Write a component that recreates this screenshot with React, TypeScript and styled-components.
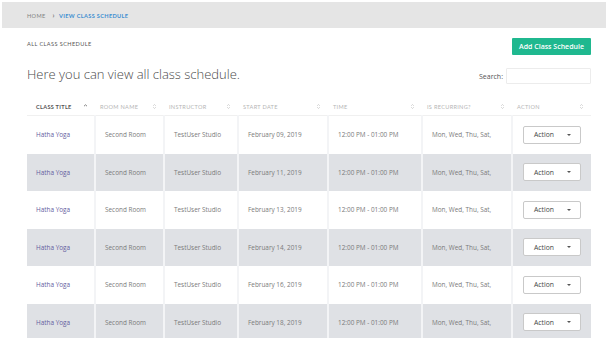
import React from "react";
import styled, { createGlobalStyle } from "styled-components";

const Global = createGlobalStyle`
  html, body { margin: 0; padding: 0; background: #ffffff; }
  body { font-family: "Lato", "Open Sans", sans-serif; }
`;

const Page = styled.div`
  width: 606px;
  height: 338px;
  overflow: hidden;
  background: #fff;
`;

const Breadcrumb = styled.nav`
  margin: 2px 0 0 2px;
  height: 26px;
  background: #e5e5e5;
  display: flex;
  align-items: center;
  padding-left: 25px;
  gap: 4px;
  font-family: "Lato", sans-serif;
  font-size: 5.6px;
  letter-spacing: 0.35px;
  text-transform: uppercase;
`;

const Crumb = styled.span<{ $active?: boolean }>`
  color: ${(p) => (p.$active ? "#3d8fd1" : "#808080")};
  font-weight: ${(p) => (p.$active ? 700 : 400)};
`;

const Sep = styled.span`
  color: #777;
  font-size: 7px;
  font-weight: 700;
  margin: 0 0 0 3px;
`;

const Content = styled.main`
  padding: 0 15px 0 27px;
`;

const TopRow = styled.div`
  margin-top: 10px;
  height: 17px;
  display: flex;
  align-items: center;
  justify-content: space-between;
`;

const SectionLabel = styled.span`
  font-size: 5.6px;
  letter-spacing: 0.4px;
  color: #555;
  text-transform: uppercase;
  font-weight: 400;
  margin-top: -7px;
`;

const AddButton = styled.button`
  width: 79px;
  height: 17px;
  border: none;
  border-radius: 1px;
  background: #1fb88f;
  color: #fff;
  font-family: "Open Sans", sans-serif;
  font-size: 7px;
  font-weight: 600;
  padding: 0;
  cursor: pointer;
`;

const HeadRow = styled.div`
  margin-top: 7px;
  height: 24px;
  display: flex;
  align-items: center;
  justify-content: space-between;
`;

const Heading = styled.h1`
  margin: 0;
  font-family: "Open Sans", sans-serif;
  font-weight: 300;
  font-size: 13px;
  color: #4a4a4a;
  line-height: 20px;
`;

const SearchGroup = styled.label`
  display: flex;
  align-items: center;
  gap: 3px;
  margin-top: 4px;
  font-family: "Open Sans", sans-serif;
  font-size: 7px;
  color: #555;
`;

const SearchInput = styled.input`
  width: 85px;
  height: 16px;
  box-sizing: border-box;
  border: 1px solid #ececec;
  border-radius: 1px;
  outline: none;
  padding: 0 4px;
`;

const Table = styled.table`
  margin-top: 11px;
  width: 564px;
  table-layout: fixed;
  border-collapse: collapse;
`;

const Th = styled.th<{ $active?: boolean }>`
  height: 18px;
  padding: 0 0 0 ${(p) => (p.$active ? 9 : 5)}px;
  text-align: left;
  font-size: 5.6px;
  letter-spacing: 0.3px;
  text-transform: uppercase;
  font-weight: ${(p) => (p.$active ? 700 : 400)};
  color: ${(p) => (p.$active ? "#555" : "#b5b5b5")};
  border-bottom: 1px solid #f0f0f0;
`;

const ThInner = styled.div`
  display: flex;
  align-items: center;
  justify-content: space-between;
  padding-right: 7px;
`;

const SortIcon = styled.svg`
  width: 5px;
  height: 7px;
  flex: none;
`;

const Tr = styled.tr<{ $striped?: boolean }>`
  background: ${(p) => (p.$striped ? "#dfe1e5" : "#ffffff")};
`;

const Td = styled.td<{ $link?: boolean; $center?: boolean }>`
  height: 37.5px;
  padding: 0 0 0 ${(p) => (p.$center ? 0 : 9)}px;
  text-align: ${(p) => (p.$center ? "center" : "left")};
  font-family: "Open Sans", sans-serif;
  font-size: 6.4px;
  color: ${(p) => (p.$link ? "#645da0" : "#7a7a7a")};
  border-left: 2px solid #f3f4f6;
  &:first-child { border-left: none; }
  white-space: nowrap;
  overflow: hidden;
`;

const ActionButton = styled.button`
  width: 58px;
  height: 18px;
  box-sizing: border-box;
  background: #fff;
  border: 1px solid #c9c9c9;
  border-radius: 2px;
  display: inline-flex;
  align-items: center;
  justify-content: space-between;
  padding: 0 9px 0 10px;
  font-family: "Open Sans", sans-serif;
  font-size: 6.8px;
  color: #444;
  cursor: pointer;
`;

const Caret = styled.span`
  width: 0;
  height: 0;
  border-left: 2px solid transparent;
  border-right: 2px solid transparent;
  border-top: 2.5px solid #555;
`;

const SortUp = () => (
  <SortIcon viewBox="0 0 5 7">
    <path d="M1 3.2 L2.5 1.8 L4 3.2" fill="none" stroke="#666" strokeWidth="0.8" />
  </SortIcon>
);

const SortBoth = () => (
  <SortIcon viewBox="0 0 5 7">
    <path d="M1.2 2.8 L2.5 1.5 L3.8 2.8 M1.2 4.2 L2.5 5.5 L3.8 4.2" fill="none" stroke="#c2c2c2" strokeWidth="0.7" />
  </SortIcon>
);

const columns = [
  { label: "Class Title", width: 68, active: true },
  { label: "Room Name", width: 69 },
  { label: "Instructor", width: 74 },
  { label: "Start Date", width: 90 },
  { label: "Time", width: 94 },
  { label: "Is Recurring?", width: 90 },
  { label: "Action", width: 79 },
];

const dates = [
  "February 09, 2019",
  "February 11, 2019",
  "February 13, 2019",
  "February 14, 2019",
  "February 16, 2019",
  "February 18, 2019",
];

export default function App() {
  return (
    <Page>
      <Global />
      <Breadcrumb>
        <Crumb>Home</Crumb>
        <Sep>›</Sep>
        <Crumb $active>View Class Schedule</Crumb>
      </Breadcrumb>
      <Content>
        <TopRow>
          <SectionLabel>All Class Schedule</SectionLabel>
          <AddButton>Add Class Schedule</AddButton>
        </TopRow>
        <HeadRow>
          <Heading>Here you can view all class schedule.</Heading>
          <SearchGroup>
            Search:
            <SearchInput type="text" />
          </SearchGroup>
        </HeadRow>
        <Table>
          <colgroup>
            {columns.map((c) => (
              <col key={c.label} style={{ width: c.width }} />
            ))}
          </colgroup>
          <thead>
            <tr>
              {columns.map((c) => (
                <Th key={c.label} $active={c.active}>
                  <ThInner>
                    <span>{c.label}</span>
                    {c.active ? <SortUp /> : <SortBoth />}
                  </ThInner>
                </Th>
              ))}
            </tr>
          </thead>
          <tbody>
            {dates.map((d, i) => (
              <Tr key={d} $striped={i % 2 === 1}>
                <Td $link>Hatha Yoga</Td>
                <Td>Second Room</Td>
                <Td>TestUser Studio</Td>
                <Td>{d}</Td>
                <Td>12:00 PM - 01:00 PM</Td>
                <Td>Mon, Wed, Thu, Sat,</Td>
                <Td $center>
                  <ActionButton>
                    <span>Action</span>
                    <Caret />
                  </ActionButton>
                </Td>
              </Tr>
            ))}
          </tbody>
        </Table>
      </Content>
    </Page>
  );
}
